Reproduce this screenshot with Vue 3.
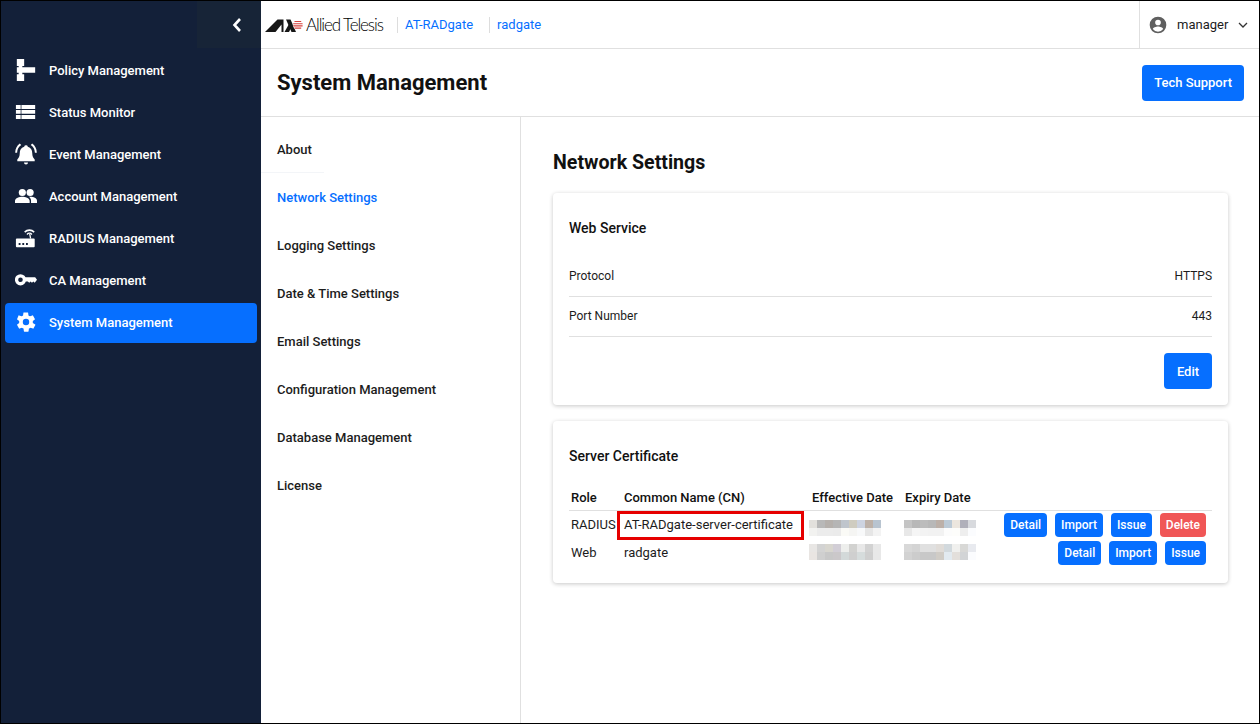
<template>
  <div class="frame">
    <aside class="sidebar">
      <div class="side-top">
        <button class="collapse">
          <svg width="12" height="16" viewBox="0 0 12 16"><path d="M9 2 L3.5 8 L9 14" fill="none" stroke="#fff" stroke-width="2.6" /></svg>
        </button>
      </div>
      <nav class="side-nav">
        <a v-for="item in navItems" :key="item.label" class="nav-item" :class="{ active: item.active }">
          <svg class="nav-icon" viewBox="0 0 24 24" fill="#fff" v-html="item.icon"></svg>
          <span>{{ item.label }}</span>
        </a>
      </nav>
    </aside>

    <div class="body">
      <header class="topbar">
        <div class="logo">
          <svg width="38" height="13" viewBox="0 0 38 13">
            <path d="M0 13 L12.500 .5 H18.500 V13 Z" fill="#161616" />
            <path d="M10.500 13 L16.500 5.500 V13 Z" fill="#fff" />
            <path d="M21 .5 H25.500 L31 13 H26.500 Z" fill="#161616" />
            <path d="M19.500 13 L24 5 L26 9 L24 13 Z" fill="#161616" />
            <circle cx="32.800" cy="5.800" r="5" fill="#fff" />
            <path d="M29.500 2.500 H36.200 M28.200 4.700 H37.600 M28.200 6.900 H37.600 M29.500 9.100 H36.200" stroke="#d8433f" stroke-width="1.100" />
          </svg>
          <span class="logo-text">Allied Telesis</span>
        </div>
        <span class="crumb first">AT-RADgate</span>
        <span class="crumb">radgate</span>
        <div class="user">
          <svg width="20" height="20" viewBox="0 0 24 24"><path fill="#5f5f5f" d="M12 2a10 10 0 1 0 0 20 10 10 0 0 0 0-20zm0 3.600a3.400 3.400 0 1 1 0 6.800 3.400 3.400 0 0 1 0-6.800zM12 20a7.600 7.600 0 0 1-6.200-3.200c.1-2 4.100-3.100 6.200-3.100s6.100 1.100 6.200 3.100A7.600 7.600 0 0 1 12 20z" /></svg>
          <span class="user-name">manager</span>
          <svg width="12" height="8" viewBox="0 0 12 8"><path d="M2 2 L6 6 L10 2" fill="none" stroke="#333" stroke-width="1.300" /></svg>
        </div>
      </header>

      <div class="page-head">
        <h1>System Management</h1>
        <button class="btn big">Tech Support</button>
      </div>

      <div class="content">
        <ul class="sub-menu">
          <li v-for="(s, i) in subItems" :key="s" :class="{ current: s === 'Network Settings', ruled: i === 0 }">{{ s }}</li>
        </ul>

        <main class="main">
          <h2>Network Settings</h2>

          <section class="card web">
            <h3>Web Service</h3>
            <div class="row"><span>Protocol</span><span>HTTPS</span></div>
            <div class="row"><span>Port Number</span><span>443</span></div>
            <div class="card-foot"><button class="btn big edit">Edit</button></div>
          </section>

          <section class="card cert">
            <h3>Server Certificate</h3>
            <table>
              <thead>
                <tr>
                  <th class="c-role">Role</th>
                  <th class="c-cn">Common Name (CN)</th>
                  <th class="c-eff">Effective Date</th>
                  <th class="c-exp">Expiry Date</th>
                  <th></th>
                </tr>
              </thead>
              <tbody>
                <tr v-for="c in certs" :key="c.role">
                  <td>{{ c.role }}</td>
                  <td class="cn">
                    {{ c.name }}
                    <span v-if="c.marked" class="mark"></span>
                  </td>
                  <td>
                    <div class="blur eff" :class="{ low: c.marked }">
                      <i v-for="(g, n) in c.eff" :key="n" :style="{ background: g }"></i>
                    </div>
                  </td>
                  <td>
                    <div class="blur exp" :class="{ low: c.marked }">
                      <i v-for="(g, n) in c.exp" :key="n" :style="{ background: g }"></i>
                    </div>
                  </td>
                  <td class="actions">
                    <button v-for="a in c.actions" :key="a" class="btn small" :class="{ danger: a === 'Delete' }">{{ a }}</button>
                  </td>
                </tr>
              </tbody>
            </table>
          </section>
        </main>
      </div>
    </div>
  </div>
</template>

<script setup>
const navItems = [
  { label: 'Policy Management', icon: '<path d="M2 0h8v7.500H8V9h14v6H8v1.500h2V24H2v-7.500h2V15H2V9h2V7.500H2z"/>' },
  { label: 'Status Monitor', icon: '<path d="M1 4.400h21v4.200H1zM1 9.800h21V14H1zM1 15.200h21v4.400H1z"/><path d="M6.200 4.400h.8v15.200h-.8z" fill="#132039"/>' },
  { label: 'Event Management', icon: '<path d="M12 2.500a2 2 0 0 1 2 1.500c3.500 1 4.800 3.800 4.800 7 0 3.500 1.200 5.500 2.700 7v2h-19v-2C4 16.500 5.200 14.500 5.200 11c0-3.200 1.300-6 4.800-7a2 2 0 0 1 2-1.500zM9.800 21.200h4.400a2.200 2.200 0 0 1-4.400 0z"/><path d="M5.200 .6 6.800 2.200C3.800 4.400 2.500 7 2.300 10.500H.2C.4 6.200 2 3 5.200 .6zM18.800 .6C22 3 23.600 6.200 23.800 10.500h-2.100C21.500 7 20.200 4.400 17.200 2.200z"/>' },
  { label: 'Account Management', icon: '<circle cx="8" cy="8.200" r="3.900"/><circle cx="16.500" cy="8.200" r="3.900"/><path d="M0 19.600v-2.400c0-3 5-4.500 8-4.500s8 1.500 8 4.500v2.400zM17.500 19.600v-2.400c0-1.800-1-3.200-2.300-4.300 3.800-.5 8.800 1 8.800 4.300v2.400z"/>' },
  { label: 'RADIUS Management', icon: '<rect x="1" y="12.500" width="20.500" height="9.500" rx="1"/><path d="M15.400 7.500h1.400l.9 5h-1.400z"/><path d="M10 5a8 8 0 0 1 11.500 0l-1.100 1.200a6.500 6.500 0 0 0-9.300 0zM12.500 7.500a4.500 4.500 0 0 1 6.500 0L18 8.700a3 3 0 0 0-4.500 0z"/><path fill="#132039" d="M4 17.500h2v2H4zM8 17.500h2v2H8zM12 17.500h2v2h-2z"/>' },
  { label: 'CA Management', icon: '<circle cx="6" cy="11.800" r="4.300" fill="none" stroke="#fff" stroke-width="3.600"/><path d="M11 9H22l2 2.600-2.500 3.400-1.500-1.500-1.500 1.500-1.500-1.500-1.500 1.500-1.500-1.500H11z"/>' },
  { label: 'System Management', active: true, icon: '<path d="M19.400 13a7.500 7.500 0 0 0 0-2l2.200-1.700c.2-.2.300-.5.100-.7l-2.100-3.600c-.1-.2-.4-.3-.6-.2l-2.600 1a7.500 7.500 0 0 0-1.700-1L14.300 2c0-.3-.2-.5-.5-.5H9.700c-.3 0-.5.200-.5.500l-.4 2.800a8 8 0 0 0-1.700 1l-2.600-1c-.2-.1-.5 0-.6.200L2.300 8.600c-.1.200-.1.500.1.700L4.600 11a7.500 7.500 0 0 0 0 2l-2.200 1.700c-.2.200-.3.500-.1.700l2.100 3.600c.1.200.4.300.6.200l2.600-1c.5.400 1.100.7 1.700 1l.4 2.800c0 .3.200.5.500.5h4.100c.3 0 .5-.2.500-.5l.4-2.800a8 8 0 0 0 1.700-1l2.600 1c.2.100.5 0 .6-.2l2.100-3.600c.1-.2.100-.5-.1-.7zM12 15.500a3.500 3.500 0 1 1 0-7 3.500 3.500 0 0 1 0 7z"/>' }
]

const subItems = [
  'About',
  'Network Settings',
  'Logging Settings',
  'Date & Time Settings',
  'Email Settings',
  'Configuration Management',
  'Database Management',
  'License'
]

const certs = [
  {
    role: 'RADIUS',
    name: 'AT-RADgate-server-certificate',
    marked: true,
    eff: ['#e2e0dc', '#b8b8b8', '#b5b0ac', '#b5b5b5', '#bfc5cc', '#cfccc0', '#cdd3e0', '#bdb1a8', '#b8c4d0',
      '#f2f2f0', '#ececec', '#ececec', '#ebebeb', '#fafaf6', '#f5f5f3', '#f8f9fa', '#e6e6e6', '#f3f3f3'],
    exp: ['#c4c4c4', '#b8b8b8', '#bcbcbc', '#b8b8b8', '#bcb0a8', '#bccad6', '#ece6de', '#b0b0ba', '#d8dade',
      '#e8e8e8', '#f5f5f5', '#f3f3f3', '#f2f2f2', '#f2f2f2', '#fcfcfc', '#fdfdfb', '#eeeeee', '#fbfcfe'],
    actions: ['Detail', 'Import', 'Issue', 'Delete']
  },
  {
    role: 'Web',
    name: 'radgate',
    eff: ['#e8e6e4', '#d3d3d3', '#d8d6cf', '#d2ced6', '#edeeec', '#d2d2d0', '#e8e8e8', '#d2d2d2', '#e8e8e8',
      '#e9e5e2', '#cfcfcf', '#c8c8c8', '#cbc8ca', '#d3d9d9', '#cfcfcf', '#d6dcdc', '#cfcfcf', '#e8e8e8'],
    exp: ['#d8d8d8', '#d4d4d4', '#e0e0e0', '#e0e0e0', '#e0dcd8', '#d2d9dd', '#f0f0ee', '#d8d8d6', '#e8eaef',
      '#d2d2d2', '#cccccc', '#c8c8c8', '#c8c8c8', '#d0ccc6', '#e2eaf0', '#e3dfdb', '#d2d4d6', '#fbfcfe'],
    actions: ['Detail', 'Import', 'Issue']
  }
]
</script>

<style>
html, body {
  margin: 0;
  background: #fff;
}
</style>

<style scoped>
.frame {
  box-sizing: border-box;
  width: 1260px;
  height: 724px;
  border: 1px solid #000;
  display: flex;
  overflow: hidden;
  font-family: Roboto, "Liberation Sans", sans-serif;
  font-size: 13px;
  color: #1c1c1c;
  background: #fff;
}

.sidebar {
  width: 260px;
  flex: none;
  background: #132039;
}

.side-top {
  height: 48px;
  display: flex;
  justify-content: flex-end;
}

.collapse {
  width: 64px;
  height: 47px;
  border: 0;
  padding: 0 0 0 16px;
  background: #172437;
  display: flex;
  align-items: center;
  justify-content: center;
}

.side-nav {
  padding: 2px 4px 0 4px;
  display: flex;
  flex-direction: column;
  gap: 2px;
}

.nav-item {
  height: 40px;
  box-sizing: border-box;
  display: flex;
  align-items: center;
  padding: 0 0 2px 10px;
  border-radius: 4px;
  color: #fff;
  font-weight: 500;
}

.nav-item.active {
  background: #066fff;
}

.nav-icon {
  width: 22px;
  height: 22px;
  margin-right: 12px;
  flex: none;
}

.body {
  flex: 1;
  min-width: 0;
  display: flex;
  flex-direction: column;
}

.topbar {
  height: 47px;
  flex: none;
  display: flex;
  align-items: center;
  border-bottom: 1px solid #e0e0e0;
  padding-left: 4px;
}

.logo {
  display: flex;
  align-items: center;
  width: 132px;
}

.logo svg {
  margin-top: 1px;
}

.logo-text {
  font-family: Lato, sans-serif;
  font-weight: 300;
  font-size: 17px;
  letter-spacing: -1.100px;
  color: #000;
  margin-left: 3px;
}

.crumb {
  color: #066fff;
  font-size: 13px;
  border-left: 1px solid #ddd;
  padding-left: 7px;
  line-height: 16px;
  margin-right: 16px;
}

.user {
  margin-left: auto;
  height: 100%;
  width: 120px;
  box-sizing: border-box;
  border-left: 1px solid #e0e0e0;
  display: flex;
  align-items: center;
  padding-left: 8px;
}

.user-name {
  margin: 0 9px 0 9px;
}

.page-head {
  height: 68px;
  flex: none;
  box-sizing: border-box;
  border-bottom: 1px solid #e0e0e0;
  display: flex;
  align-items: center;
  justify-content: space-between;
  padding: 0 15px 0 16px;
}

h1 {
  margin: 0;
  font-size: 22px;
  font-weight: 700;
  color: #111;
}

.btn {
  border: 0;
  color: #fff;
  background: #066fff;
  font-family: inherit;
  font-weight: 500;
  border-radius: 4px;
  padding: 0;
}

.btn.big {
  height: 36px;
  padding: 0 12px;
  font-size: 13px;
}

.btn.edit {
  min-width: 48px;
}

.btn.small {
  height: 24px;
  padding: 0 6px;
  font-size: 12px;
  margin-left: 8px;
}

.btn.danger {
  background: #f05656;
}

.content {
  flex: 1;
  display: flex;
  min-height: 0;
}

.sub-menu {
  width: 260px;
  flex: none;
  box-sizing: border-box;
  margin: 0;
  padding: 9px 0 0;
  list-style: none;
  border-right: 1px solid #e0e0e0;
}

.sub-menu li {
  height: 48px;
  line-height: 48px;
  padding-left: 16px;
  font-weight: 500;
  position: relative;
}

.sub-menu li.ruled::after {
  content: "";
  position: absolute;
  left: 0;
  bottom: 1px;
  width: 63px;
  height: 1px;
  background: #f3f5f8;
}

.sub-menu li.current {
  color: #066fff;
}

.main {
  flex: 1;
  min-width: 0;
  padding: 33px 31px 0 32px;
}

h2 {
  margin: 0 0 17px;
  height: 26px;
  line-height: 26px;
  font-size: 19.600px;
  font-weight: 700;
  color: #111;
}

.card {
  box-sizing: border-box;
  border-radius: 4px;
  padding: 0 16px;
  background: #fff;
  box-shadow: 0 1px 4px rgba(0, 0, 0, 0.22);
  margin-bottom: 16px;
}

.card.web {
  height: 212px;
}

.card.cert {
  height: 162px;
}

h3 {
  margin: 0;
  height: 70px;
  line-height: 70px;
  font-size: 14px;
  font-weight: 500;
  color: #111;
}

.row {
  height: 40px;
  box-sizing: border-box;
  border-bottom: 1px solid #e0e0e0;
  padding-bottom: 2px;
  display: flex;
  align-items: center;
  justify-content: space-between;
  font-size: 12px;
}

.web h3 {
  margin-bottom: -6px;
}

.card-foot {
  display: flex;
  justify-content: flex-end;
  margin-top: 16px;
}

.cert h3 {
  margin-bottom: -7px;
}

table {
  width: 100%;
  border-collapse: collapse;
  table-layout: fixed;
  font-size: 13px;
}

th {
  box-sizing: border-box;
  text-align: left;
  font-size: 13px;
  font-weight: 500;
  color: #111;
  height: 26px;
  padding: 2px 2px 0;
  border-bottom: 1px solid #e0e0e0;
}

.c-role { width: 53px; }
.c-cn { width: 188px; }
.c-eff { width: 93px; }
.c-exp { width: 90px; }

td {
  height: 28px;
  padding: 0 2px;
  white-space: nowrap;
}

.cn {
  position: relative;
}

.mark {
  position: absolute;
  left: -5px;
  top: 0;
  width: 187px;
  height: 29px;
  box-sizing: border-box;
  border: 3px solid #e60000;
}

.blur {
  width: 72px;
  height: 16px;
  margin-bottom: 2px;
  display: grid;
  grid-template-columns: repeat(9, 1fr);
  grid-template-rows: 1fr 1fr;
}

.blur.eff { margin-left: -3px; }
.blur.exp { margin-left: -1px; }
.blur.low { margin-top: 8px; }

.actions {
  text-align: right;
  padding-right: 6px;
}
</style>
